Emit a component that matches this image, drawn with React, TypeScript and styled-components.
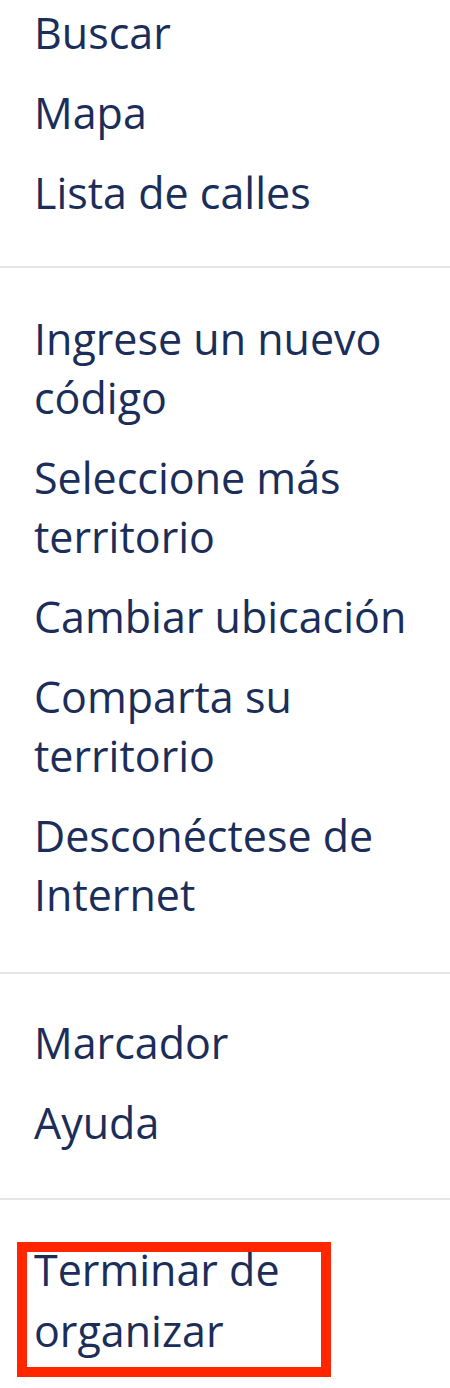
import React from "react";
import styled, { createGlobalStyle } from "styled-components";

const GlobalStyle = createGlobalStyle`
  html, body {
    margin: 0;
    padding: 0;
    background: #ffffff;
  }
  body {
    font-family: "Open Sans", "Noto Sans", sans-serif;
    -webkit-font-smoothing: antialiased;
  }
`;

type MenuSection = {
  items: string[];
  top: number;
  bottom: number;
  highlightLast?: boolean;
};

const sections: MenuSection[] = [
  { items: ["Buscar", "Mapa", "Lista de calles"], top: 3, bottom: 44 },
  {
    items: [
      "Ingrese un nuevo código",
      "Seleccione más territorio",
      "Cambiar ubicación",
      "Comparta su territorio",
      "Desconéctese de Internet",
    ],
    top: 41,
    bottom: 48,
  },
  { items: ["Marcador", "Ayuda"], top: 39, bottom: 46 },
  { items: ["Terminar de organizar"], top: 39, bottom: 0, highlightLast: true },
];

const App = () => {
  return (
    <>
      <GlobalStyle />
      <Menu>
        {sections.map((section, index) => (
          <Section
            key={index}
            top={section.top}
            bottom={section.bottom}
            divider={index < sections.length - 1}
          >
            {section.items.map((item, i) => {
              const highlighted =
                section.highlightLast && i === section.items.length - 1;
              return (
                <MenuItem key={item} selected={highlighted}>
                  {item}
                  {highlighted && <Highlight />}
                </MenuItem>
              );
            })}
          </Section>
        ))}
      </Menu>
    </>
  );
};

const Menu = styled.nav`
  width: 450px;
  min-height: 1388px;
  display: flex;
  flex-direction: column;
  background: #ffffff;
`;

const Section = styled.div<{ top: number; bottom: number; divider: boolean }>`
  display: flex;
  flex-direction: column;
  gap: 21px;
  padding: ${({ top }) => top}px 16px ${({ bottom }) => bottom}px 34px;
  border-bottom: ${({ divider }) => (divider ? "2px solid #e6e6e6" : "none")};
`;

const MenuItem = styled.a<{ selected?: boolean }>`
  position: relative;
  display: block;
  max-width: ${({ selected }) => (selected ? "285px" : "none")};
  font-size: 43px;
  line-height: ${({ selected }) => (selected ? "61px" : "59px")};
  font-weight: 400;
  color: #1b2d59;
  cursor: pointer;
`;

// red ring drawn around the selected entry
const Highlight = styled.span`
  position: absolute;
  top: 3px;
  left: -17px;
  width: 314px;
  height: 135px;
  box-sizing: border-box;
  border: 10px solid #ff2600;
  pointer-events: none;
`;

export default App;
